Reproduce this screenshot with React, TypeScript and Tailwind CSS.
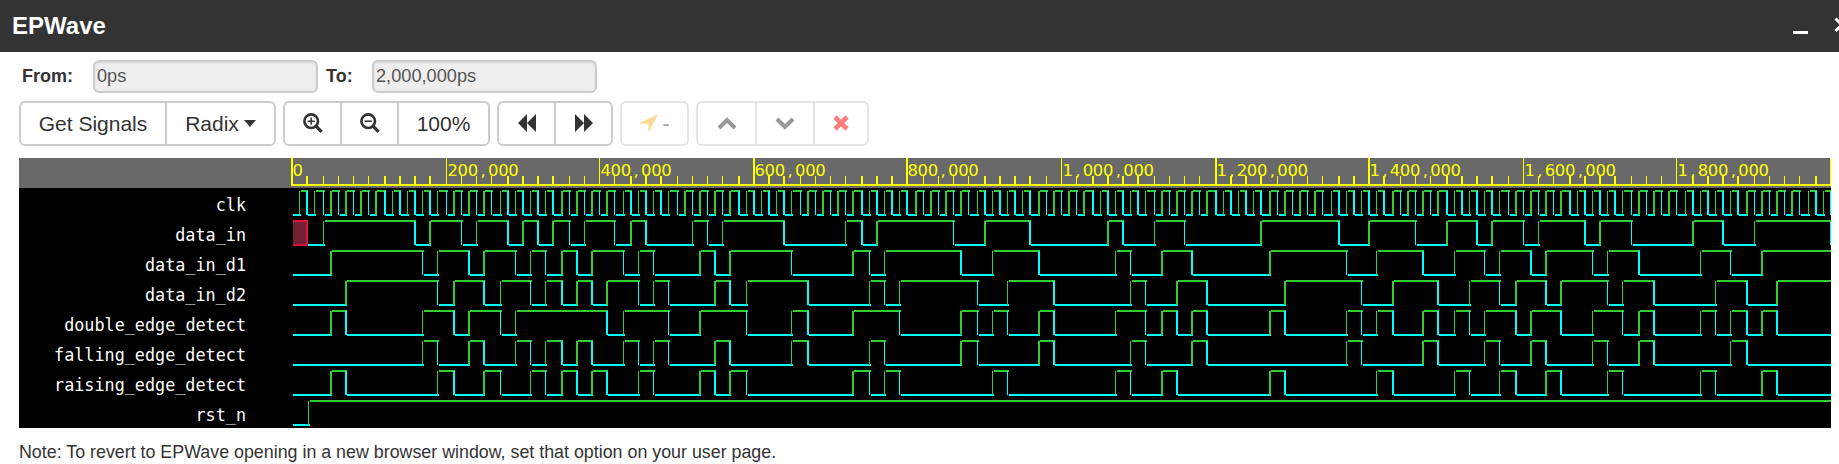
import type { ReactNode } from "react";

const TICKS = Array.from({ length: 101 }, (_, i) => i * 2);
const LABELS = ["0", "200,000", "400,000", "600,000", "800,000", "1,000,000", "1,200,000", "1,400,000", "1,600,000", "1,800,000"];

// Transition times in units of 10,000ps; every signal starts low.
const DATA_IN = [
  4, 16, 18, 22, 24, 28, 30, 32, 34, 36, 38, 42, 44, 46, 52, 54, 56, 64, 72, 74, 76, 86, 90, 96,
  106, 108, 112, 116, 126, 136, 140, 146, 150, 154, 156, 160, 162, 168, 170, 174, 182, 186, 190, 200,
];
const levelAt = (edges: number[], k: number) => edges.filter((e) => e <= k).length % 2;
const edgesOf = (fn: (k: number) => number): number[] => {
  const out: number[] = [];
  let last = 0;
  for (let k = 0; k <= 200; k++) {
    const v = fn(k);
    if (v !== last) out.push(k);
    last = v;
  }
  return out;
};
const D1 = DATA_IN.map((e) => e + 1).filter((e) => e < 200);
const D2 = DATA_IN.map((e) => e + 3).filter((e) => e < 200);
const a = (k: number) => levelAt(D1, k);
const b = (k: number) => levelAt(D2, k);

const SIGNALS: { name: string; edges: number[]; unknownUntil?: number }[] = [
  { name: "clk", edges: Array.from({ length: 200 }, (_, i) => i + 1) },
  { name: "data_in", edges: DATA_IN, unknownUntil: 2 },
  { name: "data_in_d1", edges: D1 },
  { name: "data_in_d2", edges: D2 },
  { name: "double_edge_detect", edges: edgesOf((k) => a(k) ^ b(k)) },
  { name: "falling_edge_detect", edges: edgesOf((k) => (1 - a(k)) & b(k)) },
  { name: "raising_edge_detect", edges: edgesOf((k) => a(k) & (1 - b(k))) },
  { name: "rst_n", edges: [2.1] },
];

const col = (k: number) => Math.round(k * 5.13);
const px = (k: number) => Math.ceil(col(k) * 1.5);
const thick = (k: number) => (col(k) % 2 === 0 ? 2 : 1);
const END = 1540;
const GREEN = "#32cd32";
const CYAN = "#00ffff";

function Wave({ edges, unknownUntil }: { edges: number[]; unknownUntil?: number }) {
  const parts: ReactNode[] = [];
  let start = unknownUntil ? px(unknownUntil) + 2 : 2;
  let high = false;
  if (unknownUntil) {
    const e = px(unknownUntil);
    parts.push(
      <g key="x">
        <rect x={2} y={2} width={e} height={26} fill="#dc143c" />
        <rect x={2} y={4} width={e - 2} height={22} fill="#722033" />
      </g>,
    );
  }
  [...edges, 999].forEach((k) => {
    const stop = Math.min(k === 999 ? END : px(k) + 2, END);
    if (stop > start)
      parts.push(<rect key={"h" + k} x={start} y={high ? 2 : 26} width={stop - start} height={2} fill={high ? GREEN : CYAN} />);
    high = !high;
    if (k !== 999)
      parts.push(<rect key={"v" + k} x={px(k)} y={3} width={thick(k)} height={24} fill={high ? GREEN : CYAN} />);
    start = stop;
  });
  return (
    <svg width={END} height={30} shapeRendering="crispEdges" className="block shrink-0">
      {parts}
    </svg>
  );
}

function Ruler() {
  return (
    <svg width={END} height={30} className="block shrink-0">
      <g fill="#ffff00" shapeRendering="crispEdges">
        <rect x={0} y={26} width={END} height={2} />
        {TICKS.map((k) => (
          <rect key={k} x={px(k)} y={k % 20 ? 18 : 0} width={thick(k)} height={k % 20 ? 8 : 26} />
        ))}
      </g>
      {LABELS.map((t, i) => (
        <text
          key={t}
          x={t.split("").map((c, j) => px(i * 20) + 1.4 + j * 10.15 + (c === "," ? 2.6 : 0)).join(" ")}
          y={18}
          className="fill-[#ffff00] font-['DejaVu_Sans',sans-serif] text-[16.4px]"
        >
          {t}
        </text>
      ))}
    </svg>
  );
}

function Group({ children, faded = false }: { children: ReactNode; faded?: boolean }) {
  return (
    <div className={"flex h-[45px] divide-x-2 divide-[#ccc] rounded-md border-2 border-[#ccc] bg-white text-[#333] " + (faded ? "opacity-50" : "")}>
      {children}
    </div>
  );
}

function Btn({ w, children }: { w: string; children: ReactNode }) {
  return <button className={"flex items-center justify-center whitespace-nowrap pb-px text-[21px] leading-none " + w}>{children}</button>;
}

function Zoom({ plus = false }: { plus?: boolean }) {
  return (
    <svg width="20" height="20" viewBox="0 0 20 20" fill="none" stroke="#333">
      <circle cx="8.2" cy="8.2" r="6.8" strokeWidth="2.6" />
      <path d="M13 13.2L18.6 18.8" strokeWidth="3.2" />
      <path d={plus ? "M4.6 8.2H11.8M8.2 4.6V11.8" : "M4.6 8.2H11.8"} strokeWidth="1.5" />
    </svg>
  );
}

export default function App() {
  return (
    <div className="h-[464px] w-[1839px] overflow-hidden bg-white font-['Liberation_Sans',Arial,sans-serif] text-[#333]">
      <header className="flex h-[52px] items-center bg-[#333] pl-3 text-white">
        <h1 className="text-[24px] font-bold leading-none">EPWave</h1>
        <div className="ml-auto flex h-full w-[46px] shrink-0 items-start">
          <span className="mt-[31px] h-[3px] w-[15px] shrink-0 bg-white" />
          <svg width="16" height="16" viewBox="0 0 16 16" className="ml-[26px] mt-[17px] shrink-0" stroke="#fff" strokeWidth="3">
            <path d="M1.5 1.5L14 14M14 1.5L1.5 14" />
          </svg>
        </div>
      </header>

      <div className="flex items-center pl-[22px] pt-2 text-[18px]">
        <label className="w-[71px] font-bold">From:</label>
        <input readOnly value="0ps" className="h-[33px] w-[225px] rounded-md border-2 border-[#ccc] bg-[#eee] px-0.5 text-[18.2px] text-[#555] shadow-[inset_0_1px_2px_rgba(0,0,0,0.08)]" />
        <label className="ml-2 w-[46px] font-bold">To:</label>
        <input readOnly value="2,000,000ps" className="h-[33px] w-[225px] rounded-md border-2 border-[#ccc] bg-[#eee] px-0.5 text-[18.2px] text-[#555] shadow-[inset_0_1px_2px_rgba(0,0,0,0.08)]" />
      </div>

      <div className="flex gap-[7px] pl-[19px] pt-2">
        <Group>
          <Btn w="w-[146px]">Get Signals</Btn>
          <Btn w="w-[107px]">
            Radix
            <svg width="12" height="7" viewBox="0 0 12 7" className="ml-[5px]" fill="#333"><path d="M0 0H12L6 7Z" /></svg>
          </Btn>
        </Group>
        <Group>
          <Btn w="w-[57px]"><Zoom plus /></Btn>
          <Btn w="w-[57px]"><Zoom /></Btn>
          <Btn w="w-[89px]">100%</Btn>
        </Group>
        <Group>
          <Btn w="w-[57px]">
            <svg width="18" height="18" viewBox="0 0 18 18" fill="#333"><path d="M0 9L9 0V18ZM9 9L18 0V18Z" /></svg>
          </Btn>
          <Btn w="w-[55px]">
            <svg width="18" height="18" viewBox="0 0 18 18" fill="#333"><path d="M18 9L9 0V18ZM9 9L0 0V18Z" /></svg>
          </Btn>
        </Group>
        <Group faded>
          <Btn w="w-[65px]">
            <svg width="18" height="18" viewBox="0 0 18 18" fill="#ffb833" className="mr-[5px]"><path d="M18 0.5L9.2 17.5L8.4 17.4V9.4H0L0 8.5Z" /></svg>-
          </Btn>
        </Group>
        <Group faded>
          <Btn w="w-[59px]">
            <svg width="20" height="13" viewBox="0 0 20 13" fill="none" stroke="#333" strokeWidth="4"><path d="M2 11L10 3L18 11" /></svg>
          </Btn>
          <Btn w="w-[58px]">
            <svg width="20" height="13" viewBox="0 0 20 13" fill="none" stroke="#333" strokeWidth="4"><path d="M2 2L10 10L18 2" /></svg>
          </Btn>
          <Btn w="w-[52px]">
            <svg width="16" height="16" viewBox="0 0 16 16" fill="none" stroke="#f00" strokeWidth="4.6"><path d="M2 2L14 14M14 2L2 14" /></svg>
          </Btn>
        </Group>
      </div>

      <main className="ml-[19px] mt-3 w-[1812px] bg-black">
        <div className="flex h-[30px] justify-end bg-[#696969]">
          <Ruler />
        </div>
        {SIGNALS.map((s) => (
          <div key={s.name} className="flex h-[30px]">
            <div className="w-[272px] pr-[45px] pt-[2px] text-right font-['DejaVu_Sans_Mono',monospace] text-[16.8px] leading-[30px] text-white">{s.name}</div>
            <Wave edges={s.edges} unknownUntil={s.unknownUntil} />
          </div>
        ))}
      </main>
      <p className="pl-[19px] pt-3 text-[17.83px] leading-6">Note: To revert to EPWave opening in a new browser window, set that option on your user page.</p>
    </div>
  );
}
